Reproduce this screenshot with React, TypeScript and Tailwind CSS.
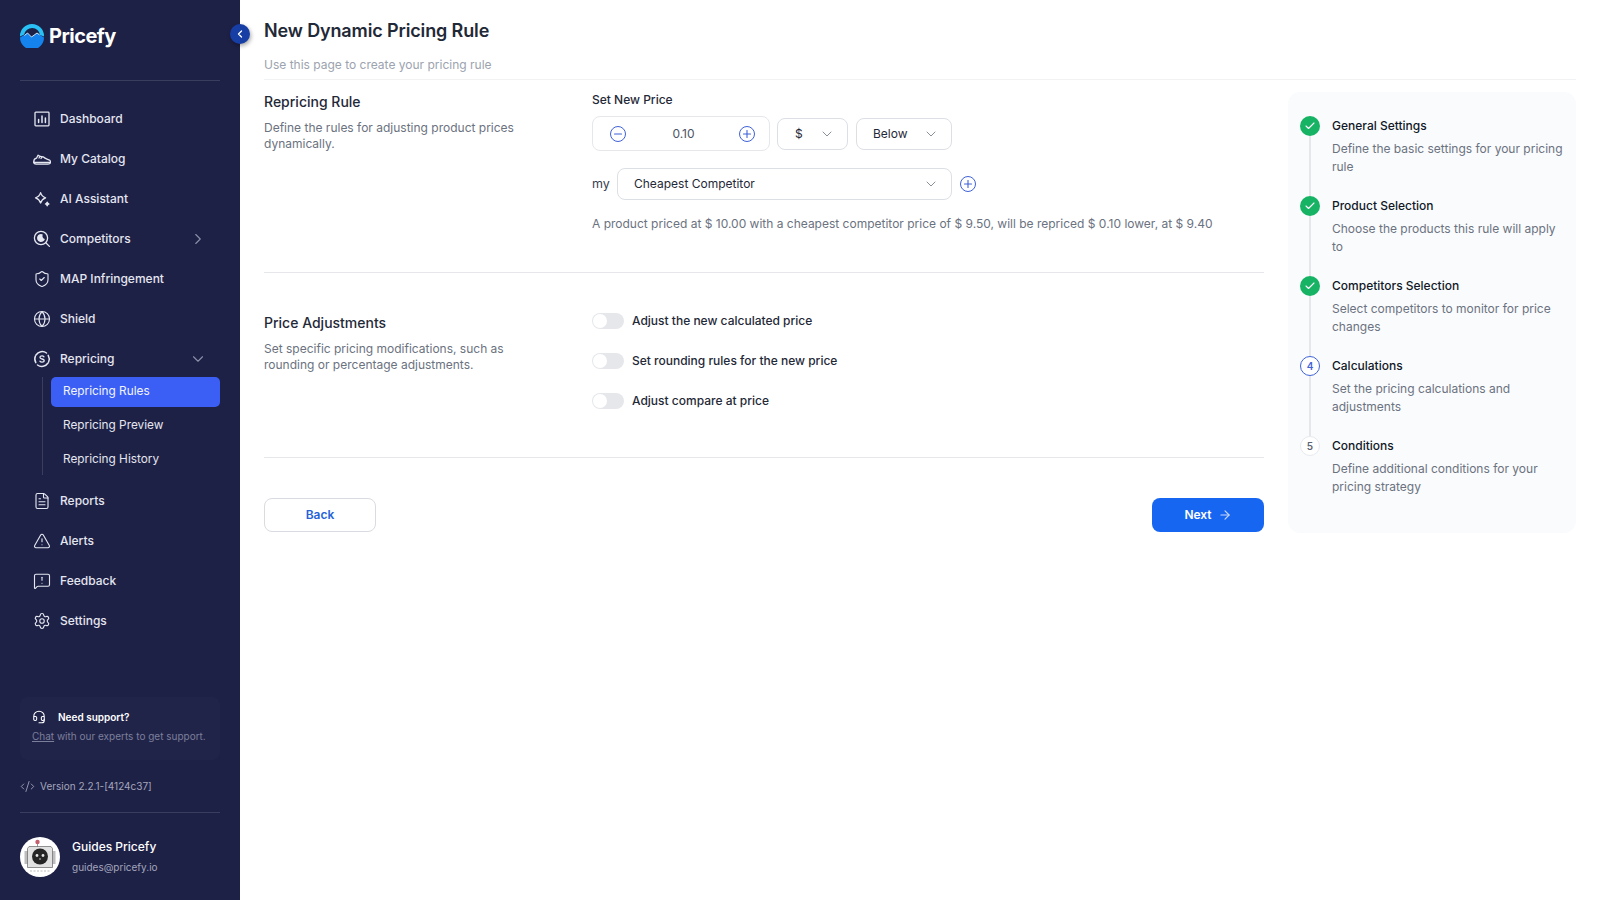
import React from "react";
import { ShieldCheck, Globe, FileText, TriangleAlert, MessageSquareWarning, Settings, ChevronRight, ChevronDown, ChevronLeft, CodeXml, Minus, Plus, Check, ArrowRight, Headset } from "lucide-react";

const I = ({ children }: { children: React.ReactNode }) => (
  <svg width="18" height="18" viewBox="0 0 18 18" fill="none" stroke="currentColor" strokeWidth="1.3" strokeLinecap="round" strokeLinejoin="round">{children}</svg>
);
const DashIcon = () => <I><rect x="2" y="2.2" width="14" height="13.6" rx="0.8" /><path d="M5.6 12.5V9.5M9 12.5V6M12.4 12.5V8" strokeWidth="1.5" /></I>;
const ShoeIcon = () => <I><path d="M.8 11.5C.8 9.5 2 8.5 3.5 8.2L5 5.2c2 1.6 4 1.6 5.5 1.8 1.5 1.7 4.5 2.3 6.2 3.3.6.4.8 1.2.8 2.2H.8Z" /><path d="M.8 11.8c0 1.6 1 2.4 2.3 2.4H15c1.6 0 2.5-.8 2.5-2.2M7 6.5 6 8M9 7 8 8.5" /></I>;
const SparkIcon = () => <I><path d="M7.6 2.6c.9 3 2.3 4.4 5 5.2-2.7.9-4.1 2.3-5 5.2-.9-2.9-2.3-4.3-5.1-5.2 2.8-.8 4.2-2.2 5.1-5.2Z" /><path d="M14.2 12.2c.3 1 .8 1.5 1.8 1.8-1 .3-1.5.8-1.8 1.8-.3-1-.8-1.5-1.8-1.8 1-.3 1.5-.8 1.8-1.8Z" fill="currentColor" /></I>;
const CompIcon = () => <I><circle cx="8" cy="8" r="6.6" /><path d="m12.8 12.8 3.6 3.6" /><path d="M9.8 4.4A4 4 0 1 0 11.9 9 3.2 3.2 0 0 1 9.8 4.4Z" fill="currentColor" stroke="none" /></I>;
const RepIcon = () => <I><path d="M3 5A7.4 7.4 0 0 1 13.5 3M15 13a7.4 7.4 0 0 1-10.5 2M15.2 5.4A7.4 7.4 0 0 1 15.6 12M2.8 12.6A7.4 7.4 0 0 1 2.4 6" strokeWidth="1.5" /><path d="M11 6.8C10.4 6 9.7 5.8 9 5.8c-1.1 0-2 .6-2 1.6 0 2.2 4.2 1 4.2 3.2 0 1-1 1.6-2.2 1.6-.8 0-1.6-.3-2.1-1" strokeWidth="1.3" /></I>;

const font = { fontFamily: "Inter, sans-serif" };

const NavRow = ({ icon, label, chevron }: { icon: React.ReactNode; label: string; chevron?: "r" | "d" }) => (
  <div className="flex h-10 items-center pl-[33px] pr-[33px] text-[12px] font-medium text-[#e4e6f0]">
    <span className="flex w-[18px] justify-center">{icon}</span>
    <span className="ml-[9px] flex-1">{label}</span>
    {chevron === "r" && <ChevronRight size={18} strokeWidth={1.5} className="text-[#8b8fa8]" />}
    {chevron === "d" && <ChevronDown size={18} strokeWidth={1.5} className="text-[#8b8fa8]" />}
  </div>
);

const Sidebar = () => (
  <aside className="relative flex h-[900px] w-[240px] shrink-0 flex-col bg-[#1e2146]">
    <div className="mx-5 flex h-[81px] shrink-0 items-start border-b border-[#3a3d5e] pt-6">
      <svg width="24" height="24" viewBox="0 0 24 24" className="shrink-0">
        <path d="M0 12.5V12A12 12 0 0 1 24 12v.5L20 11A8 8 0 0 0 4.2 10.5Z" fill="#29c1f5" />
        <path d="M0 13.6 7.5 9 11.5 13l5.5-4 7 4.6A12 12 0 0 1 0 13.6Z" fill="#1583ee" />
        <path d="M4.5 11.5 7.5 9 11.5 13l5.5-4 2.5 1.8" fill="none" stroke="#dff1ff" strokeWidth="0.9" strokeLinejoin="round" />
      </svg>
      <span className="ml-[5px] text-[20px] leading-6 font-bold tracking-[-0.5px] text-white">Pricefy</span>
    </div>
    <button className="absolute top-6 left-[230px] flex h-5 w-5 items-center justify-center rounded-full bg-[#173ea5] text-white shadow-[1px_2px_4px_rgba(0,0,0,0.35)]">
      <ChevronLeft size={12} strokeWidth={2.5} />
    </button>
    <nav className="mt-[18px] flex flex-col">
      <NavRow icon={<DashIcon />} label="Dashboard" />
      <NavRow icon={<ShoeIcon />} label="My Catalog" />
      <NavRow icon={<SparkIcon />} label="AI Assistant" />
      <NavRow icon={<CompIcon />} label="Competitors" chevron="r" />
      <NavRow icon={<ShieldCheck size={18} strokeWidth={1.5} />} label="MAP Infringement" />
      <NavRow icon={<Globe size={18} strokeWidth={1.5} />} label="Shield" />
      <NavRow icon={<RepIcon />} label="Repricing" chevron="d" />
      <div className="ml-[42px] mr-5 -mt-[2px] mb-[6px] flex flex-col border-l border-[#3a3d5e] pl-2 text-[11.8px] font-normal text-[#e4e6f0]">
        <div className="flex h-[30px] items-center rounded-[5px] bg-[#3b5ff5] pl-3 text-[#f2f4ff]">Repricing Rules</div>
        <div className="mt-1 flex h-[30px] items-center pl-3">Repricing Preview</div>
        <div className="mt-1 flex h-[30px] items-center pl-3">Repricing History</div>
      </div>
      <NavRow icon={<FileText size={18} strokeWidth={1.5} />} label="Reports" />
      <NavRow icon={<TriangleAlert size={18} strokeWidth={1.5} />} label="Alerts" />
      <NavRow icon={<MessageSquareWarning size={18} strokeWidth={1.5} />} label="Feedback" />
      <NavRow icon={<Settings size={18} strokeWidth={1.5} />} label="Settings" />
    </nav>
    <div className="mx-5 mt-auto">
      <div className="h-[63px] rounded-lg bg-[#212449] pl-3 pt-3">
        <div className="flex items-center gap-3 text-white">
          <Headset size={14} strokeWidth={1.8} />
          <span className="text-[10px] leading-4 font-semibold">Need support?</span>
        </div>
        <div className="mt-[3px] text-[10px] leading-4 text-[#7c7f9b]"><span className="underline">Chat</span> with our experts to get support.</div>
      </div>
      <div className="mt-[17px] flex h-[18px] items-center gap-[5px] text-[10px] text-[#a3a6bc]">
        <CodeXml size={15} strokeWidth={1.4} />
        <span>Version 2.2.1-[4124c37]</span>
      </div>
      <div className="mt-[17px] flex h-[88px] items-start border-t border-[#3a3d5e] pt-6">
        <svg width="40" height="40" viewBox="0 0 40 40" className="shrink-0">
          <circle cx="20" cy="20" r="20" fill="#fff" />
          <path d="M17.5 10V6" stroke="#999" strokeWidth="1" />
          <circle cx="17.5" cy="5" r="2.2" fill="#c4606e" />
          <rect x="4.5" y="14" width="3.5" height="13" fill="#bdbdbd" />
          <rect x="32" y="14" width="3.5" height="13" fill="#bdbdbd" />
          <path d="M9 9.5h22l1.5 2v19h-25v-19Z" fill="#e2e2e2" stroke="#666" strokeWidth="0.7" />
          <circle cx="20" cy="19.5" r="8" fill="#262626" />
          <circle cx="17" cy="18.5" r="1.4" fill="#e5e5e5" />
          <circle cx="23" cy="18.5" r="1.4" fill="#e5e5e5" />
          <path d="M19 22h2" stroke="#e5e5e5" strokeWidth="0.8" />
          <path d="M10 34h20" stroke="#bbb" strokeWidth="1" strokeDasharray="2 1.5" />
        </svg>
        <div className="ml-3">
          <div className="text-[12px] leading-5 font-medium text-white">Guides Pricefy</div>
          <div className="text-[10px] leading-5 text-[#a3a6bc]">guides@pricefy.io</div>
        </div>
      </div>
    </div>
  </aside>
);

const RoundBtn = ({ minus }: { minus?: boolean }) => (
  <span className="flex h-4 w-4 items-center justify-center rounded-full border-[1.5px] border-[#3f62d8] text-[#3f62d8]">
    {minus ? <Minus size={12} strokeWidth={2.2} /> : <Plus size={12} strokeWidth={2.2} />}
  </span>
);

const Select = ({ label, className }: { label: string; className: string }) => (
  <div className={`flex items-center justify-between rounded-lg border border-[#dcdfe4] bg-white pr-[12px] text-[12px] text-[#1f2937] ${className}`}>
    <span>{label}</span>
    <ChevronDown size={16} strokeWidth={1.5} className="text-[#8a9099]" />
  </div>
);

const Toggle = ({ label }: { label: string }) => (
  <div className="flex h-10 items-center">
    <span className="relative h-4 w-8 rounded-full bg-[#e5e7eb]">
      <span className="absolute top-[1px] left-[1px] h-[14px] w-[14px] rounded-full bg-white" />
    </span>
    <span className="ml-2 text-[12px] font-medium text-[#1f2937]">{label}</span>
  </div>
);

const steps = [
  { t: "General Settings", d: "Define the basic settings for your pricing rule", s: "done" },
  { t: "Product Selection", d: "Choose the products this rule will apply to", s: "done" },
  { t: "Competitors Selection", d: "Select competitors to monitor for price changes", s: "done" },
  { t: "Calculations", d: "Set the pricing calculations and adjustments", s: "cur", n: 4 },
  { t: "Conditions", d: "Define additional conditions for your pricing strategy", s: "todo", n: 5 },
];

const Stepper = () => (
  <aside className="h-[441px] w-[288px] shrink-0 rounded-xl bg-[#fafbfd] px-3 pt-[24px]">
    {steps.map((s, i) => (
      <div key={s.t} className="relative flex h-[80px] gap-3">
        {i < steps.length - 1 && <span className="absolute top-5 bottom-0 left-[9px] w-[2px] bg-[#e5e7eb]" />}
        <span className="relative shrink-0">
          {s.s === "done" && <span className="flex h-5 w-5 items-center justify-center rounded-full bg-[#16b364] text-white"><Check size={12} strokeWidth={2.2} /></span>}
          {s.s === "cur" && <span className="flex h-5 w-5 items-center justify-center rounded-full border border-[#3f62d8] bg-white text-[10px] font-semibold text-[#3f62d8]">4</span>}
          {s.s === "todo" && <span className="flex h-5 w-5 items-center justify-center rounded-full border border-[#e8eaee] bg-white text-[10px] font-semibold text-[#5b6472]">5</span>}
        </span>
        <div className="w-[236px]">
          <div className="text-[12px] leading-5 font-medium text-[#111827]">{s.t}</div>
          <div className="mt-1 text-[12px] leading-[18px] text-[#6b7280]">{s.d}</div>
        </div>
      </div>
    ))}
  </aside>
);

export default function App() {
  return (
    <div className="flex h-[900px] w-[1600px] overflow-hidden bg-white" style={font}>
      <Sidebar />
      <main className="flex-1 px-6">
        <header className="h-[80px] border-b border-[#f1f2f4] pt-[19px]">
          <h1 className="text-[18px] leading-[24px] font-semibold tracking-[-0.13px] text-[#1f2937]">New Dynamic Pricing Rule</h1>
          <p className="mt-[14px] text-[12px] leading-[16px] text-[#9ca3af]">Use this page to create your pricing rule</p>
        </header>
        <div className="mt-3 flex gap-6">
          <div className="w-[1000px]">
            <section className="flex h-[181px] border-b border-[#e5e7eb]">
              <div className="w-[328px]">
                <h2 className="text-[14px] leading-5 font-medium text-[#1f2937]">Repricing Rule</h2>
                <p className="mt-[8px] w-[270px] text-[12px] leading-4 text-[#6b7280]">Define the rules for adjusting product prices dynamically.</p>
              </div>
              <div>
                <div className="text-[12px] leading-4 font-medium text-[#1f2937]">Set New Price</div>
                <div className="mt-[8px] flex items-center">
                  <div className="flex h-[35px] w-[178px] items-center justify-between rounded-lg border border-[#e5e7eb] pr-[14px] pl-[17px]">
                    <RoundBtn minus />
                    <span className="pl-[2px] text-[12px] text-[#4b5563]">0.10</span>
                    <RoundBtn />
                  </div>
                  <Select label="$" className="ml-[7px] h-8 w-[71px] pl-[17px]" />
                  <Select label="Below" className="ml-2 h-8 w-[96px] pl-[16px]" />
                </div>
                <div className="mt-[17px] flex items-center">
                  <span className="w-[25px] text-[12.5px] text-[#374151]">my</span>
                  <Select label="Cheapest Competitor" className="h-8 w-[335px] pl-[16px]" />
                  <span className="ml-2"><RoundBtn /></span>
                </div>
                <p className="mt-[16px] text-[12px] leading-4 whitespace-nowrap text-[#6b7280]">A product priced at $ 10.00 with a cheapest competitor price of $ 9.50, will be repriced $ 0.10 lower, at $ 9.40</p>
              </div>
            </section>
            <section className="flex h-[185px] border-b border-[#e5e7eb]">
              <div className="w-[328px] pt-[40px]">
                <h2 className="text-[14px] leading-5 font-medium text-[#1f2937]">Price Adjustments</h2>
                <p className="mt-2 w-[270px] text-[12px] leading-4 text-[#6b7280]">Set specific pricing modifications, such as rounding or percentage adjustments.</p>
              </div>
              <div className="pt-[28px]">
                <Toggle label="Adjust the new calculated price" />
                <Toggle label="Set rounding rules for the new price" />
                <Toggle label="Adjust compare at price" />
              </div>
            </section>
            <div className="mt-10 flex justify-between">
              <button className="h-[34px] w-[112px] rounded-lg border border-[#d8dbe0] bg-white text-[12px] font-semibold text-[#2563d8]">Back</button>
              <button className="flex h-[34px] w-[112px] items-center justify-center gap-[6px] rounded-lg bg-[#1766f2] text-[12px] font-semibold text-white">Next <ArrowRight size={14} strokeWidth={2} className="text-[#c7d8fb]" /></button>
            </div>
          </div>
          <Stepper />
        </div>
      </main>
    </div>
  );
}
